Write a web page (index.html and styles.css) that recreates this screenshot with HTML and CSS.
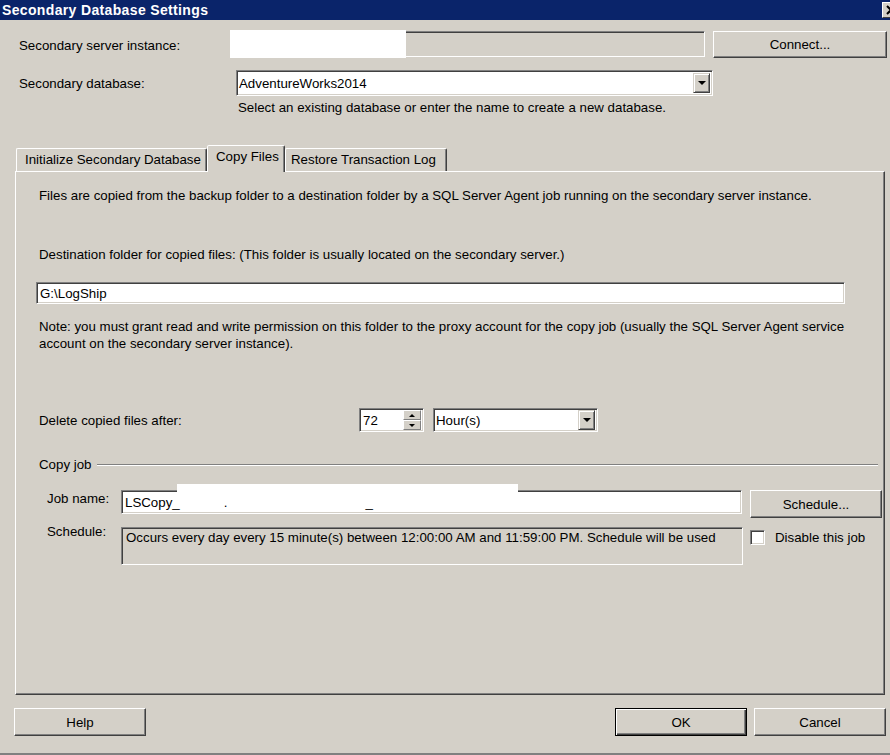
FILE: index.html
```html
<!DOCTYPE html>
<html lang="en">
<head>
    <meta charset="UTF-8">
    <title>Secondary Database Settings</title>
    <link rel="stylesheet" href="styles.css">
</head>
<body>
<div class="window">
    <div class="titlebar">
        <span class="title">Secondary Database Settings</span>
        <span class="close">
            <svg width="14" height="12" viewBox="0 0 14 12"><path d="M3 2 L11 10 M11 2 L3 10" stroke="#000" stroke-width="2"/></svg>
        </span>
    </div>

    <div class="row row-server">
        <span class="label server-label">Secondary server instance:</span>
        <div class="field server-field"><span class="redact"></span></div>
        <button class="btn connect-btn">Connect...</button>
    </div>

    <div class="row row-db">
        <span class="label db-label">Secondary database:</span>
        <div class="field combo db-combo">
            <span class="combo-text">AdventureWorks2014</span>
            <span class="drop"><span class="arrow"></span></span>
        </div>
    </div>
    <div class="hint">Select an existing database or enter the name to create a new database.</div>

    <div class="tabs">
        <div class="tab tab-init">Initialize Secondary Database</div>
        <div class="tab active">Copy Files</div>
        <div class="tab tab-restore">Restore Transaction Log</div>
    </div>

    <div class="panel">
        <p class="text intro">Files are copied from the backup folder to a destination folder by a SQL Server Agent job running on the secondary server instance.</p>
        <p class="text dest">Destination folder for copied files: (This folder is usually located on the secondary server.)</p>
        <div class="field folder-field"><span class="field-text">G:\LogShip</span></div>
        <p class="text note">Note: you must grant read and write permission on this folder to the proxy account for the copy job (usually the SQL Server Agent service account on the secondary server instance).</p>

        <div class="delete-row">
            <span class="label delete-label">Delete copied files after:</span>
            <div class="field spin">
                <span class="field-text">72</span>
                <span class="spin-btns">
                    <span class="spin-btn"><span class="tri up"></span></span>
                    <span class="spin-btn"><span class="tri down"></span></span>
                </span>
            </div>
            <div class="field combo unit-combo">
                <span class="combo-text">Hour(s)</span>
                <span class="drop"><span class="arrow"></span></span>
            </div>
        </div>

        <div class="group-head">
            <span class="group-title">Copy job</span>
            <span class="group-line"></span>
        </div>

        <div class="job-row">
            <span class="label job-label">Job name:</span>
            <div class="field job-field">
                <span class="field-text">LSCopy_<span class="gap1"></span>.<span class="gap2"></span>_</span>
                <span class="job-redact"></span>
            </div>
            <button class="btn schedule-btn">Schedule...</button>
        </div>

        <div class="sched-row">
            <span class="label job-label">Schedule:</span>
            <div class="field sched-box">Occurs every day every 15 minute(s) between 12:00:00 AM and 11:59:00 PM. Schedule will be used</div>
            <label class="check">
                <span class="box"></span>
                <span>Disable this job</span>
            </label>
        </div>
    </div>

    <div class="footer">
        <button class="btn help-btn">Help</button>
        <button class="btn default ok-btn">OK</button>
        <button class="btn cancel-btn">Cancel</button>
    </div>
</div>
</body>
</html>
```

FILE: styles.css
```css
body {
    margin: 0;
    background-color: #d4d0c8;
    font-family: 'Liberation Sans', Arial, sans-serif;
    font-size: 13.3px;
    color: #000;
}

.window {
    width: 890px;
    height: 755px;
    overflow: hidden;
    background-color: #d4d0c8;
    border-bottom: 2px solid #808080;
    box-sizing: border-box;
}

.titlebar {
    height: 21px;
    background-color: #0a246a;
    color: #fff;
    display: flex;
    align-items: center;
    border-bottom: 1px solid #d4d0c8;
    box-sizing: border-box;
}

.title {
    font-weight: bold;
    font-size: 14px;
    letter-spacing: 0.35px;
    padding-left: 2px;
}

.close {
    margin-left: auto;
    margin-right: -10px;
    width: 16px;
    height: 14px;
    background-color: #d4d0c8;
    border: 1px solid;
    border-color: #fff #404040 #404040 #fff;
    display: flex;
    align-items: center;
    justify-content: center;
}

/* classic 3d borders */
.field {
    background-color: #fff;
    border: 1px solid;
    border-color: #808080 #fff #fff #808080;
    box-shadow: inset 1px 1px #404040, inset -1px -1px #d4d0c8;
    box-sizing: border-box;
    display: flex;
    align-items: center;
}

.btn {
    font-family: inherit;
    font-size: 13.3px;
    color: #000;
    background-color: #d4d0c8;
    border: 1px solid;
    border-color: #fff #404040 #404040 #fff;
    box-shadow: inset -1px -1px #808080, inset 1px 1px #d4d0c8;
    padding: 0;
    box-sizing: border-box;
}

.btn.default {
    border: 1px solid #000;
    box-shadow: inset 1px 1px #fff, inset -1px -1px #404040, inset -2px -2px #808080;
}

.row {
    display: flex;
    align-items: center;
    padding-left: 19px;
}

.row-server {
    margin-top: 8px;
    height: 29px;
}

.server-label {
    width: 211px;
    margin-top: 3px;
}

.server-field {
    width: 475px;
    height: 26px;
    background-color: #d4d0c8;
}

.redact {
    width: 176px;
    height: 28px;
    margin-left: -1px;
    background-color: #fff;
}

.connect-btn {
    width: 174px;
    height: 27px;
    margin-left: 8px;
    margin-top: 2px;
}

.row-db {
    margin-top: 12px;
    height: 26px;
}

.db-label {
    width: 217px;
}

.combo {
    justify-content: space-between;
    padding-left: 2px;
}

.db-combo {
    width: 477px;
    height: 26px;
}

.drop {
    width: 17px;
    height: 20px;
    margin-right: 2px;
    background-color: #d4d0c8;
    border: 1px solid;
    border-color: #d4d0c8 #404040 #404040 #d4d0c8;
    box-shadow: inset 1px 1px #fff, inset -1px -1px #808080;
    box-sizing: border-box;
    display: flex;
    align-items: center;
    justify-content: center;
}

.arrow {
    width: 0;
    height: 0;
    border-left: 4px solid transparent;
    border-right: 4px solid transparent;
    border-top: 4px solid #000;
}

.hint {
    margin: 4px 0 0 238px;
    line-height: 16px;
}

.tabs {
    display: flex;
    align-items: flex-end;
    margin: 28px 0 0 16px;
    height: 27px;
    position: relative;
    z-index: 1;
}

.tab {
    height: 23px;
    line-height: 21px;
    padding: 0 8px;
    border: 1px solid;
    border-bottom: none;
    border-color: #fff #404040 transparent #fff;
    box-shadow: inset -1px 0 #808080;
    box-sizing: border-box;
    border-radius: 2px 2px 0 0;
    white-space: nowrap;
}

.tab-init {
    width: 191px;
    padding-left: 8px;
}

.tab.active {
    height: 27px;
    line-height: 22px;
    width: 78px;
    margin-bottom: -1px;
    background-color: #d4d0c8;
    padding-left: 8px;
}

.tab-restore {
    width: 162px;
    padding-left: 5px;
}

.panel {
    margin-left: 15px;
    width: 870px;
    height: 524px;
    border: 1px solid;
    border-color: #fff #404040 #404040 #fff;
    box-shadow: inset -1px -1px #808080;
    box-sizing: border-box;
    padding-left: 23px;
}

.text {
    margin: 0;
    line-height: 17px;
}

.intro {
    margin-top: 15px;
}

.dest {
    margin-top: 42px;
}

.folder-field {
    margin: 19px 0 0 -3px;
    width: 809px;
    height: 22px;
}

.field-text {
    padding-left: 3px;
    white-space: pre;
}

.note {
    margin-top: 14px;
    width: 810px;
}

.delete-row {
    display: flex;
    align-items: center;
    margin-top: 56px;
    height: 24px;
}

.delete-label {
    width: 320px;
}

.spin {
    width: 65px;
    height: 24px;
    justify-content: space-between;
}

.spin-btns {
    display: flex;
    flex-direction: column;
    margin-right: 2px;
}

.spin-btn {
    width: 18px;
    height: 10px;
    background-color: #d4d0c8;
    border: 1px solid;
    border-color: #fff #808080 #808080 #fff;
    box-sizing: border-box;
    display: flex;
    align-items: center;
    justify-content: center;
}

.tri {
    width: 0;
    height: 0;
    border-left: 3px solid transparent;
    border-right: 3px solid transparent;
}

.tri.up {
    border-bottom: 3px solid #000;
}

.tri.down {
    border-top: 3px solid #000;
}

.unit-combo {
    width: 165px;
    height: 24px;
    margin-left: 9px;
}

.group-head {
    display: flex;
    align-items: center;
    margin-top: 24px;
    height: 16px;
}

.group-line {
    flex: 1;
    margin: 1px 6px 0 6px;
    border-top: 1px solid #808080;
    border-bottom: 1px solid #fff;
}

.job-row {
    display: flex;
    align-items: flex-start;
    margin-top: 18px;
}

.job-label {
    width: 74px;
    padding-left: 8px;
    line-height: 17px;
}

.job-field {
    width: 621px;
    height: 24px;
    position: relative;
}

.gap1 {
    display: inline-block;
    width: 44px;
}

.gap2 {
    display: inline-block;
    width: 138px;
}

.job-redact {
    position: absolute;
    left: 55px;
    top: -7px;
    width: 341px;
    height: 17px;
    background-color: #fff;
}

.schedule-btn {
    width: 132px;
    height: 28px;
    margin-left: 8px;
}

.sched-row {
    display: flex;
    align-items: flex-start;
    margin-top: 9px;
}

.sched-row .job-label {
    margin-top: -4px;
}

.sched-box {
    width: 622px;
    height: 38px;
    background-color: #d4d0c8;
    align-items: flex-start;
    padding: 2px 0 0 4px;
}

.check {
    display: flex;
    align-items: center;
    margin: 3px 0 0 7px;
}

.box {
    width: 15px;
    height: 15px;
    background-color: #fff;
    border: 1px solid;
    border-color: #808080 #fff #fff #808080;
    box-shadow: inset 1px 1px #404040, inset -1px -1px #d4d0c8;
    box-sizing: border-box;
    margin-right: 10px;
}

.footer {
    display: flex;
    margin-top: 13px;
    padding-left: 14px;
}

.footer .btn {
    width: 132px;
    height: 28px;
}

.ok-btn {
    margin-left: 469px;
}

.cancel-btn {
    margin-left: 7px;
}
```
